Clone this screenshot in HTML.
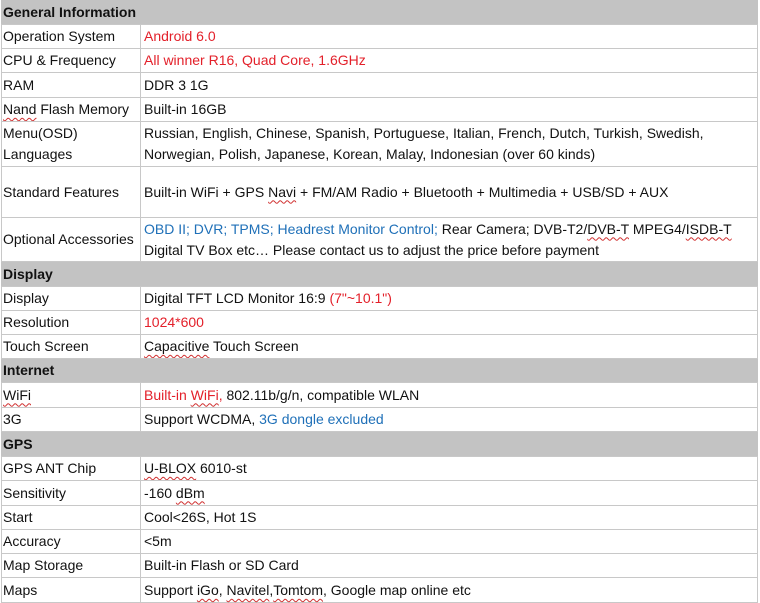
<!DOCTYPE html>
<html><head><style>
body{margin:0;background:#fff;width:760px;height:603px;overflow:hidden;font-family:"Liberation Sans",Arial,sans-serif;font-size:14px;color:#111}
.r{position:absolute;left:1px;width:757px;border-top:1px solid #c8c8c8;box-sizing:border-box}
.h{background:#c3c3c3;font-weight:bold;padding-left:2px;}
.a{position:absolute;left:0;top:0;bottom:0;width:140px;border-right:1px solid #c8c8c8;padding-left:2px;display:flex;align-items:center;box-sizing:border-box;line-height:21px}
.b{position:absolute;left:141px;right:0;top:0;bottom:0;padding-left:2px;display:flex;align-items:center;line-height:21px}
.red{color:#e3202a}.blu{color:#1f70b8}
.w{text-decoration:underline wavy #d03030;text-decoration-thickness:1px;text-underline-offset:3px}
#frame{position:absolute;left:1px;top:0;width:757px;height:603px;border-left:1px solid #c8c8c8;border-right:1px solid #c8c8c8;border-bottom:1px solid #c8c8c8;box-sizing:border-box}
</style></head><body>
<div id="frame"></div>
<div class="r h" style="top:0;height:24px;line-height:24px;border-top:none">General Information</div>
<div class="r" style="top:24px;height:24px"><div class="a">Operation System</div><div class="b red">Android 6.0</div></div>
<div class="r" style="top:48px;height:24px"><div class="a">CPU &amp; Frequency</div><div class="b red">All winner R16, Quad Core, 1.6GHz</div></div>
<div class="r" style="top:72px;height:25px"><div class="a">RAM</div><div class="b">DDR 3 1G</div></div>
<div class="r" style="top:97px;height:24px"><div class="a"><span><span class="w">Nand</span> Flash Memory</span></div><div class="b">Built-in 16GB</div></div>
<div class="r" style="top:121px;height:45px"><div class="a">Menu(OSD)<br>Languages</div><div class="b"><span>Russian, English, Chinese, Spanish, Portuguese, Italian, French, Dutch, Turkish, Swedish,<br>Norwegian, Polish, Japanese, Korean, Malay, Indonesian (over 60 kinds)</span></div></div>
<div class="r" style="top:166px;height:51px"><div class="a">Standard Features</div><div class="b"><span>Built-in WiFi + GPS <span class="w">Navi</span> + FM/AM Radio + Bluetooth + Multimedia + USB/SD + AUX</span></div></div>
<div class="r" style="top:217px;height:44px"><div class="a">Optional Accessories</div><div class="b"><span><span class="blu">OBD II; DVR; TPMS; Headrest Monitor Control;</span> Rear Camera; DVB-T2/<span class="w">DVB-T</span> MPEG4/<span class="w">ISDB-T</span><br>Digital TV Box etc… Please contact us to adjust the price before payment</span></div></div>
<div class="r h" style="top:261px;height:25px;line-height:24px">Display</div>
<div class="r" style="top:286px;height:24px"><div class="a">Display</div><div class="b"><span>Digital TFT LCD Monitor 16:9 <span class="red">(7"~10.1")</span></span></div></div>
<div class="r" style="top:310px;height:24px"><div class="a">Resolution</div><div class="b red">1024*600</div></div>
<div class="r" style="top:334px;height:24px"><div class="a">Touch Screen</div><div class="b"><span><span class="w">Capacitive</span> Touch Screen</span></div></div>
<div class="r h" style="top:358px;height:24px;line-height:23px">Internet</div>
<div class="r" style="top:382px;height:25px"><div class="a"><span class="w">WiFi</span></div><div class="b"><span><span class="red">Built-in <span class="w">WiFi</span>,</span> 802.11b/g/n, compatible WLAN</span></div></div>
<div class="r" style="top:407px;height:24px"><div class="a">3G</div><div class="b"><span>Support WCDMA, <span class="blu">3G dongle excluded</span></span></div></div>
<div class="r h" style="top:431px;height:25px;line-height:24px">GPS</div>
<div class="r" style="top:456px;height:24px"><div class="a">GPS ANT Chip</div><div class="b"><span><span class="w">U-BLOX</span> 6010-st</span></div></div>
<div class="r" style="top:480px;height:25px"><div class="a">Sensitivity</div><div class="b"><span>-160 <span class="w">dBm</span></span></div></div>
<div class="r" style="top:505px;height:24px"><div class="a">Start</div><div class="b">Cool&lt;26S, Hot 1S</div></div>
<div class="r" style="top:529px;height:24px"><div class="a">Accuracy</div><div class="b">&lt;5m</div></div>
<div class="r" style="top:553px;height:24px"><div class="a">Map Storage</div><div class="b">Built-in Flash or SD Card</div></div>
<div class="r" style="top:577px;height:26px"><div class="a">Maps</div><div class="b"><span>Support <span class="w">iGo</span>, <span class="w">Navitel</span>,<span class="w">Tomtom</span>, Google map online etc</span></div></div>
</body></html>
